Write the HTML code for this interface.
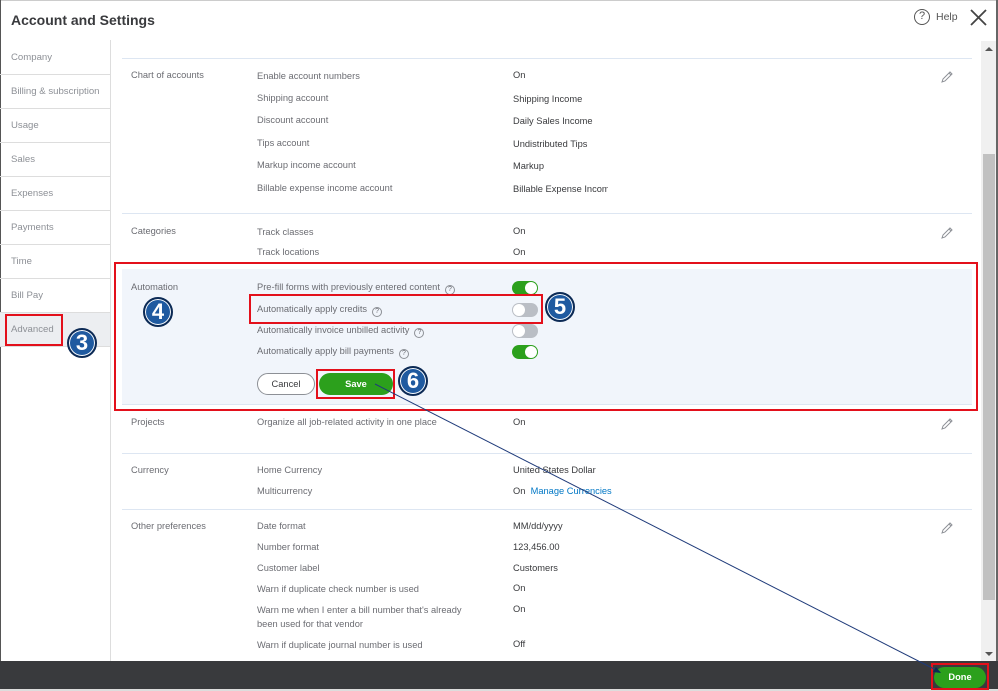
<!DOCTYPE html>
<html><head><meta charset="utf-8"><style>
*{margin:0;padding:0;box-sizing:border-box}
body{width:998px;height:691px;overflow:hidden;background:#fff;font-family:"Liberation Sans",sans-serif;color:#6b6c72;position:relative;font-size:9.3px}
.a{position:absolute;white-space:nowrap;line-height:12px}
.nav{position:absolute;left:0;width:110px;height:34px;border-bottom:1px solid #ddd;padding:11px 0 0 11px;color:#8d9096;font-size:9.6px}
.hl{position:absolute;left:122px;width:850px;height:1px;background:#dde6f2}
.v{color:#393a3d}
.tg{position:absolute;width:26px;height:14px;border-radius:7px}
.tg::after{content:"";position:absolute;top:1px;width:12px;height:12px;border-radius:50%;background:#fff}
.on{background:#2ca01c}.on::after{right:1px}
.off{background:#babec5}.off::after{left:1px}
.q{display:inline-block;width:10px;height:10px;border:1px solid #8d9096;border-radius:50%;font-size:7px;line-height:8px;text-align:center;margin-left:5px;vertical-align:-1px}
.num{position:absolute;width:30px;height:30px;border-radius:50%;background:#1f5aa0;border:2px solid #0c2a55;color:#fff;font-weight:bold;font-size:22px;text-align:center;line-height:26px;box-shadow:0 0 0 1px #fff inset}
.red{position:absolute;border:2px solid #e3101b}
.pen{position:absolute;width:12px;height:12px}
</style></head><body>
<div style="position:absolute;left:0;top:0;width:998px;height:1px;background:#ccc"></div>
<div class="a" style="left:11px;top:12px;font-size:14px;font-weight:bold;color:#393a3d;line-height:17px">Account and Settings</div>
<div style="position:absolute;left:914px;top:9px;width:16px;height:16px;border:1.5px solid #555;border-radius:50%;font-size:11px;text-align:center;line-height:13px;color:#555">?</div>
<div class="a" style="left:936px;top:11px;font-size:10.5px;color:#555">Help</div>
<svg style="position:absolute;left:970px;top:9px" width="17" height="17"><path d="M1 1L16 16M16 1L1 16" stroke="#444" stroke-width="1.8"/></svg>
<div style="position:absolute;left:0;top:0;width:1px;height:691px;background:#555"></div>
<div style="position:absolute;left:110px;top:40px;width:1px;height:621px;background:#ddd"></div>
<div class="nav" style="top:41px">Company</div>
<div class="nav" style="top:75px">Billing &amp; subscription</div>
<div class="nav" style="top:109px">Usage</div>
<div class="nav" style="top:143px">Sales</div>
<div class="nav" style="top:177px">Expenses</div>
<div class="nav" style="top:211px">Payments</div>
<div class="nav" style="top:245px">Time</div>
<div class="nav" style="top:279px">Bill Pay</div>
<div class="nav" style="top:313px;background:#eceef1;height:34px">Advanced</div>
<div class="red" style="left:5px;top:314px;width:58px;height:32px"></div>
<div class="num" style="left:67px;top:328px">3</div>

<div class="hl" style="top:58px"></div>
<div class="a" style="left:131px;top:69px">Chart of accounts</div>
<div class="a" style="left:257px;top:70px">Enable account numbers</div><div class="a v" style="left:513px;top:69px">On</div>
<div class="a" style="left:257px;top:92px">Shipping account</div><div class="a v" style="left:513px;top:93px">Shipping Income</div>
<div class="a" style="left:257px;top:114px">Discount account</div><div class="a v" style="left:513px;top:115px">Daily Sales Income</div>
<div class="a" style="left:257px;top:137px">Tips account</div><div class="a v" style="left:513px;top:138px">Undistributed Tips</div>
<div class="a" style="left:257px;top:159px">Markup income account</div><div class="a v" style="left:513px;top:160px">Markup</div>
<div class="a" style="left:257px;top:182px">Billable expense income account</div><div class="a v" style="left:513px;top:183px;width:95px;overflow:hidden">Billable Expense Income</div>
<svg class="pen" style="left:941px;top:71px" viewBox="0 0 12 12"><path d="M1 11l1-3 7-7 2 2-7 7z M8 2l2 2" fill="none" stroke="#8d9096"/></svg>
<div class="hl" style="top:213px"></div>
<div class="a" style="left:131px;top:225px">Categories</div>
<div class="a" style="left:257px;top:226px">Track classes</div><div class="a v" style="left:513px;top:225px">On</div>
<div class="a" style="left:257px;top:246px">Track locations</div><div class="a v" style="left:513px;top:246px">On</div>
<svg class="pen" style="left:941px;top:227px" viewBox="0 0 12 12"><path d="M1 11l1-3 7-7 2 2-7 7z M8 2l2 2" fill="none" stroke="#8d9096"/></svg>

<div style="position:absolute;left:122px;top:269px;width:850px;height:136px;background:#f1f5fb;border-bottom:1px solid #dde6f2"></div>
<div class="red" style="left:114px;top:262px;width:864px;height:149px"></div>
<div class="a" style="left:131px;top:281px">Automation</div>
<div class="num" style="left:143px;top:297px">4</div>
<div class="a" style="left:257px;top:281px">Pre-fill forms with previously entered content<span class="q">?</span></div>
<div class="tg on" style="left:512px;top:281px"></div>
<div class="a" style="left:257px;top:303px">Automatically apply credits<span class="q">?</span></div>
<div class="tg off" style="left:512px;top:303px"></div>
<div class="red" style="left:249px;top:294px;width:294px;height:30px"></div>
<div class="num" style="left:545px;top:292px">5</div>
<div class="a" style="left:257px;top:324px">Automatically invoice unbilled activity<span class="q">?</span></div>
<div class="tg off" style="left:512px;top:324px"></div>
<div class="a" style="left:257px;top:345px">Automatically apply bill payments<span class="q">?</span></div>
<div class="tg on" style="left:512px;top:345px"></div>
<div style="position:absolute;left:257px;top:373px;width:58px;height:22px;border:1px solid #8d9096;border-radius:11px;background:#fff;text-align:center;line-height:20px;color:#393a3d">Cancel</div>
<div style="position:absolute;left:319px;top:373px;width:74px;height:22px;border-radius:11px;background:#2ca01c;text-align:center;line-height:22px;color:#fff;font-weight:bold">Save</div>
<div class="red" style="left:316px;top:369px;width:79px;height:30px"></div>
<div class="num" style="left:398px;top:366px">6</div>

<div class="a" style="left:131px;top:416px">Projects</div>
<div class="a" style="left:257px;top:416px">Organize all job-related activity in one place</div><div class="a v" style="left:513px;top:416px">On</div>
<svg class="pen" style="left:941px;top:418px" viewBox="0 0 12 12"><path d="M1 11l1-3 7-7 2 2-7 7z M8 2l2 2" fill="none" stroke="#8d9096"/></svg>
<div class="hl" style="top:453px"></div>
<div class="a" style="left:131px;top:464px">Currency</div>
<div class="a" style="left:257px;top:464px">Home Currency</div><div class="a v" style="left:513px;top:464px">United States Dollar</div>
<div class="a" style="left:257px;top:485px">Multicurrency</div><div class="a v" style="left:513px;top:485px">On &nbsp;<span style="color:#0077c5">Manage Currencies</span></div>
<div class="hl" style="top:509px"></div>
<div class="a" style="left:131px;top:520px">Other preferences</div>
<div class="a" style="left:257px;top:520px">Date format</div><div class="a v" style="left:513px;top:520px">MM/dd/yyyy</div>
<div class="a" style="left:257px;top:541px">Number format</div><div class="a v" style="left:513px;top:541px">123,456.00</div>
<div class="a" style="left:257px;top:562px">Customer label</div><div class="a v" style="left:513px;top:562px">Customers</div>
<div class="a" style="left:257px;top:583px">Warn if duplicate check number is used</div><div class="a v" style="left:513px;top:582px">On</div>
<div class="a" style="left:257px;top:603px;line-height:14px">Warn me when I enter a bill number that's already<br>been used for that vendor</div><div class="a v" style="left:513px;top:603px">On</div>
<div class="a" style="left:257px;top:639px">Warn if duplicate journal number is used</div><div class="a v" style="left:513px;top:638px">Off</div>
<svg class="pen" style="left:941px;top:522px" viewBox="0 0 12 12"><path d="M1 11l1-3 7-7 2 2-7 7z M8 2l2 2" fill="none" stroke="#8d9096"/></svg>

<div style="position:absolute;left:981px;top:41px;width:15px;height:620px;background:#f0f0f0"></div>
<div style="position:absolute;left:983px;top:154px;width:12px;height:446px;background:#c1c1c1"></div>
<div style="position:absolute;left:985px;top:47px;border:4px solid transparent;border-bottom:4px solid #555;border-top:0"></div>
<div style="position:absolute;left:985px;top:652px;border:4px solid transparent;border-top:4px solid #555;border-bottom:0"></div>
<div style="position:absolute;left:996px;top:0;width:2px;height:691px;background:#666"></div>

<div style="position:absolute;left:0;top:661px;width:998px;height:28px;background:#393a3d"></div>
<div style="position:absolute;left:0;top:689px;width:998px;height:2px;background:#ddd"></div>
<div style="position:absolute;left:934px;top:667px;width:52px;height:21px;border-radius:11px;background:#2ca01c;color:#fff;font-weight:bold;text-align:center;line-height:21px">Done</div>
<div class="red" style="left:931px;top:663px;width:58px;height:27px"></div>
<svg style="position:absolute;left:0;top:0" width="998" height="691"><line x1="375" y1="384" x2="940" y2="672" stroke="#1f3b7a" stroke-width="1"/><path d="M941 673l-8-1 3-5z" fill="#0c2a55"/></svg>
</body></html>
